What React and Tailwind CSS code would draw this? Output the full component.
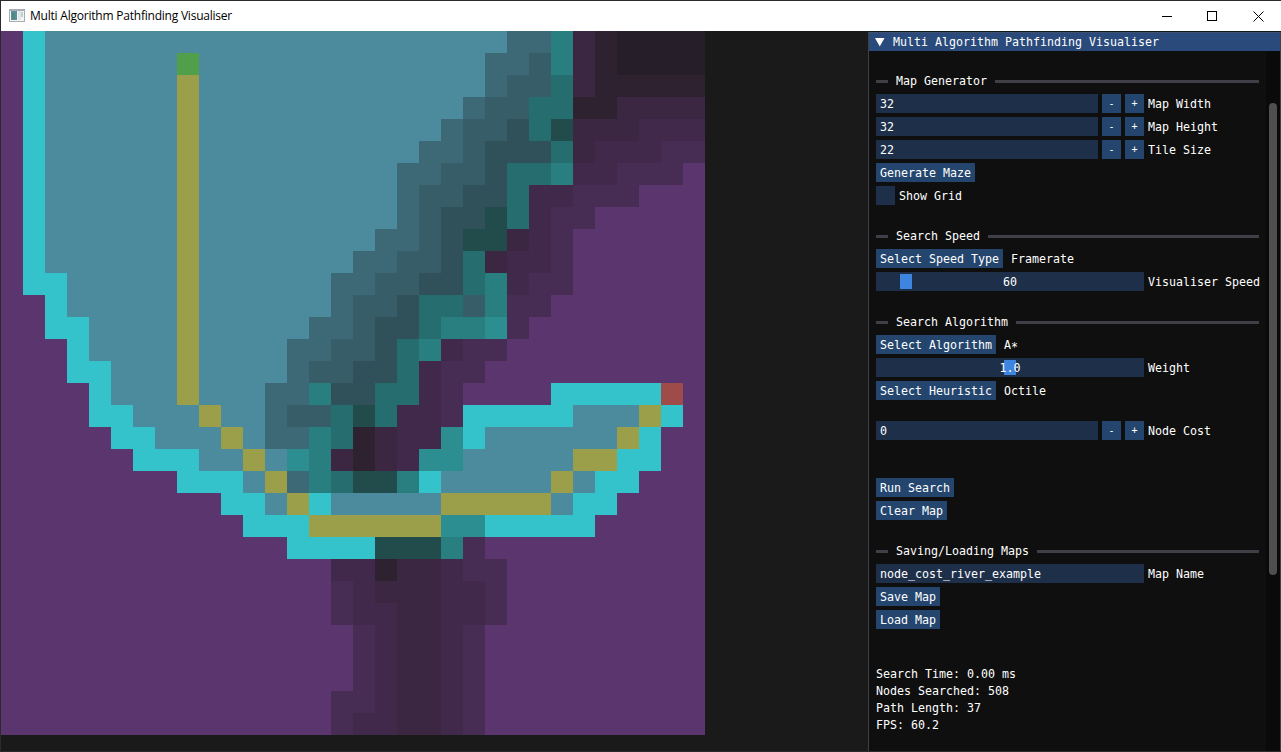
const PALETTE = {
  P: "bg-[#5b366e]",
  C: "bg-[#34c3ca]",
  B: "bg-[#4b8b9d]",
  Y: "bg-[#9c9f4a]",
  G: "bg-[#519f4a]",
  R: "bg-[#9f4b4a]",
  a: "bg-[#3d6977]",
  b: "bg-[#375d68]",
  c: "bg-[#31515a]",
  u: "bg-[#2c8e90]",
  v: "bg-[#297e80]",
  w: "bg-[#266d6f]",
  x: "bg-[#224b4c]",
  p: "bg-[#472c53]",
  q: "bg-[#40294b]",
  r: "bg-[#3b2741]",
  s: "bg-[#2e2231]",
  t: "bg-[#261f29]",
};

// Each row is a run-length list: tile letter followed by its count.
const ROWS = [
  "P C B21 a2 v r s t4",
  "P C B6 G B13 a2 b v r s t4",
  "P C B6 Y B13 a b2 w r s5",
  "P C B6 Y B12 a b2 w2 s2 r4",
  "P C B6 Y B11 a b2 c w x r3 q3",
  "P C B6 Y B10 a2 b c3 w r q3 p2",
  "P C B6 Y B9 a2 b2 c w2 v q2 p3 P",
  "P C B6 Y B9 a b2 c2 w q2 p3 P3",
  "P C B6 Y B9 a b c2 x w q p2 P5",
  "P C B6 Y B8 a2 b c x2 r q p P6",
  "P C B6 Y B7 a2 b2 c w r q2 p P6",
  "P C2 B5 Y B6 a2 b2 c2 w v q p2 P6",
  "P2 C B5 Y B6 a b2 c w2 b v p2 P7",
  "P2 C2 B4 Y B5 a2 b c2 w v2 u p P8",
  "P3 C B4 Y B4 a2 b2 c w v q p2 P9",
  "P3 C2 B3 Y B4 a b2 c2 w q p2 P10",
  "P4 C B3 Y B3 a2 v c2 w2 q p P4 C5 R P",
  "P4 C2 B3 Y B2 a b2 w x w q2 p C5 B3 Y C P",
  "P5 C2 B3 Y B a2 v w s r q2 u C B6 Y C P2",
  "P6 C3 B2 Y B u v r s r q u2 B5 Y2 C2 P2",
  "P8 C3 B Y a v w x2 v C B5 Y B C2 P3",
  "P10 C2 B Y C B5 Y5 B C2 P4",
  "P11 C3 Y6 u2 C5 P5",
  "P13 C4 x3 v p P10",
  "P15 q2 s r2 q p2 P9",
  "P15 p q r3 q2 p P9",
  "P15 p q2 r2 q2 p P9",
  "P16 p q r2 q p P10",
  "P16 p q r2 q p P10",
  "P16 p q r2 q p P10",
  "P15 p2 q r2 q p P10",
  "P15 p q2 r2 q p P10",
].map((row) =>
  row.split(" ").flatMap((run) => Array(Number(run.slice(1) || 1)).fill(run[0]))
);

function TileMap() {
  return (
    <div className="grid h-[704px] w-[704px] shrink-0 grid-cols-[repeat(32,22px)] auto-rows-[22px]">
      {ROWS.flatMap((row, y) => row.map((t, x) => <div key={`${y}-${x}`} className={PALETTE[t]} />))}
    </div>
  );
}

function TitleBar() {
  return (
    <header className="flex h-[30px] shrink-0 items-center bg-white text-black">
      <svg className="ml-2 shrink-0" width="16" height="16" viewBox="0 0 16 16" shapeRendering="crispEdges">
        <rect x="0" y="1" width="16" height="13" fill="#a9adb2" />
        <rect x="1" y="3" width="14" height="10" fill="#f3f5f6" />
        <rect x="2" y="3" width="6" height="9" fill="#5c8f9c" />
        <rect x="3" y="5" width="3" height="6" fill="#4d8a80" />
        <rect x="9" y="3" width="3" height="9" fill="#e3e6e8" />
        <rect x="12" y="4" width="2" height="5" fill="#b8d3c8" />
      </svg>
      <h1 className="ml-[5px] w-[203px] whitespace-nowrap font-['Open_Sans',sans-serif] text-[12px] leading-4 tracking-[-0.22px]">
        Multi Algorithm Pathfinding Visualiser
      </h1>
      <div className="ml-auto mr-[17px] flex items-center gap-[35px]">
        <svg width="11" height="11" viewBox="0 0 11 11" shapeRendering="crispEdges">
          <path d="M1 5.5H11" stroke="#000" fill="none" />
        </svg>
        <svg width="11" height="11" viewBox="0 0 11 11" shapeRendering="crispEdges">
          <path d="M.5 .5H9.5V9.5H.5Z" stroke="#000" fill="none" />
        </svg>
        <svg width="11" height="11" viewBox="0 0 11 11">
          <path d="M.5 .5L10.5 10.5M10.5 .5L.5 10.5" stroke="#000" fill="none" />
        </svg>
      </div>
    </header>
  );
}

function Heading({ children }) {
  return (
    <div className="flex h-[13px] w-[383px] items-center gap-2">
      <div className="h-[3px] w-3 bg-[#3f3f47]" />
      <h2>{children}</h2>
      <div className="h-[3px] flex-1 bg-[#3f3f47]" />
    </div>
  );
}

function Button({ children }) {
  return <button className="flex h-[19px] items-start bg-[#24466e] px-1 leading-[21px]">{children}</button>;
}

function StepButton({ children }) {
  return (
    <button className="ml-1 flex size-[19px] items-start justify-center bg-[#24466e] text-[10px] leading-[20px]">
      {children}
    </button>
  );
}

function Row({ children }) {
  return <div className="flex h-[19px] items-start leading-[21px]">{children}</div>;
}

function NumberField({ value, label }) {
  return (
    <Row>
      <div className="h-[19px] w-[222px] bg-[#1e2f49] px-1">{value}</div>
      <StepButton>-</StepButton>
      <StepButton>+</StepButton>
      <span className="ml-1">{label}</span>
    </Row>
  );
}

function Slider({ value, label, offset }) {
  return (
    <Row>
      <div className="relative h-[19px] w-[268px] bg-[#1e2f49] text-center">
        <div className="absolute top-[2px] h-[15px] w-3 bg-[#3d85e0]" style={{ left: offset }} />
        <span className="relative">{value}</span>
      </div>
      <span className="ml-1">{label}</span>
    </Row>
  );
}

function Choice({ action, value }) {
  return (
    <Row>
      <Button>{action}</Button>
      <span className="ml-2">{value}</span>
    </Row>
  );
}

function Section({ title, children }) {
  return (
    <section className="flex flex-col items-start gap-1">
      <div className="mb-[2px]">
        <Heading>{title}</Heading>
      </div>
      {children}
    </section>
  );
}

function Panel() {
  return (
    <aside className="ml-auto flex h-[720px] w-[413px] shrink-0 flex-col border-l border-r border-[#3f3f47] bg-[#0f0f0f] font-['DejaVu_Sans_Mono',monospace] text-[11.63px] leading-[19px] whitespace-pre text-white">
      <div className="flex h-[19px] shrink-0 items-start border-t border-[#3f4f70] bg-[#294a7a] pl-[6px]">
        <svg className="mt-[5px]" width="10" height="9" viewBox="0 0 10 9">
          <path d="M0 0H9.5L4.75 8.5Z" fill="#fff" />
        </svg>
        <span className="ml-2">Multi Algorithm Pathfinding Visualiser</span>
      </div>
      <div className="flex min-h-0 flex-1">
        <div className="flex w-[397px] shrink-0 flex-col gap-[34px] pt-6 pl-[7px]">
          <Section title="Map Generator">
            <NumberField value="32" label="Map Width" />
            <NumberField value="32" label="Map Height" />
            <NumberField value="22" label="Tile Size" />
            <Button>Generate Maze</Button>
            <Row>
              <div className="size-[19px] bg-[#1e2f49]" />
              <span className="ml-1">Show Grid</span>
            </Row>
          </Section>
          <div className="-mt-[9px]">
            <Section title="Search Speed">
              <Choice action="Select Speed Type" value="Framerate" />
              <Slider value="60" label="Visualiser Speed" offset={24} />
            </Section>
          </div>
          <div className="-mt-[9px]">
            <Section title="Search Algorithm">
              <Choice
                action="Select Algorithm"
                value={
                  <>
                    A<span className="align-[-2px] leading-none">*</span>
                  </>
                }
              />
              <Slider value="1.0" label="Weight" offset={128} />
              <Choice action="Select Heuristic" value="Octile" />
              <div className="mt-[17px]">
                <NumberField value="0" label="Node Cost" />
              </div>
            </Section>
          </div>
          <div className="mt-1 flex flex-col items-start gap-1">
            <Button>Run Search</Button>
            <Button>Clear Map</Button>
          </div>
          <div className="-mt-[9px]">
            <Section title="Saving/Loading Maps">
              <Row>
                <div className="h-[19px] w-[268px] bg-[#1e2f49] px-1">node_cost_river_example</div>
                <span className="ml-1">Map Name</span>
              </Row>
              <Button>Save Map</Button>
              <Button>Load Map</Button>
            </Section>
          </div>
          <div className="mt-[3px] leading-[17px]">
            <p>Search Time: 0.00 ms</p>
            <p>Nodes Searched: 508</p>
            <p>Path Length: 37</p>
            <p>FPS: 60.2</p>
          </div>
        </div>
        <div className="w-[14px] shrink-0 bg-[#0a0a0a] pt-[52px] pl-[3px]">
          <div className="h-[472px] w-2 rounded-full bg-[#4f4f4f]" />
        </div>
      </div>
    </aside>
  );
}

export default function App() {
  return (
    <div className="flex h-[752px] w-[1281px] flex-col overflow-hidden border-t border-b border-l border-[#2b2a2d] bg-[#1a1a1a]">
      <TitleBar />
      <main className="flex min-h-0 flex-1">
        <TileMap />
        <div className="ml-auto h-[720px] shrink-0 border-t border-[#111a1a]">
          <Panel />
        </div>
      </main>
    </div>
  );
}
